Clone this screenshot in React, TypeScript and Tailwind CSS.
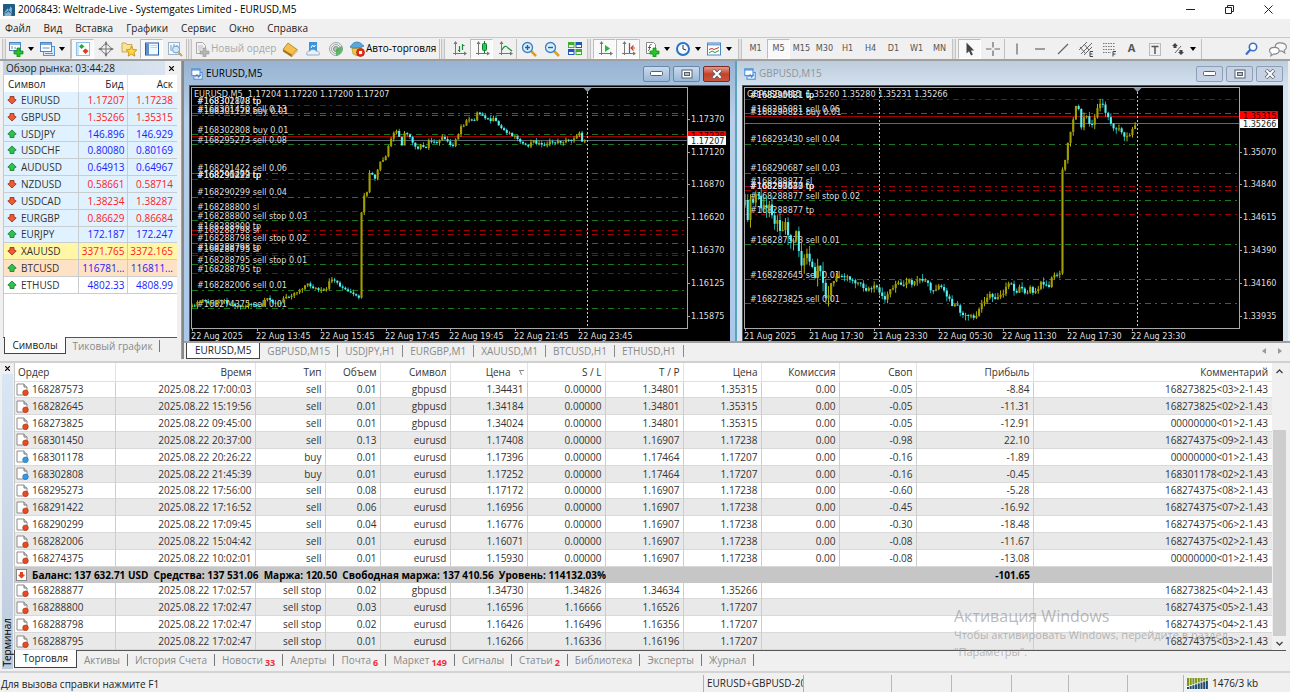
import type { ReactNode } from 'react';
import clsx from 'clsx';

/* ---------- data ---------- */

const MENU = ['Файл', 'Вид', 'Вставка', 'Графики', 'Сервис', 'Окно', 'Справка'];

type Quote = { symbol: string; bid: string; ask: string; up: boolean; bg: string };

const QUOTES: Quote[] = [
    { symbol: 'EURUSD', bid: '1.17207', ask: '1.17238', up: false, bg: 'bg-[#e0f2ff]' },
    { symbol: 'GBPUSD', bid: '1.35266', ask: '1.35315', up: false, bg: 'bg-[#e0f2ff]' },
    { symbol: 'USDJPY', bid: '146.896', ask: '146.929', up: true, bg: 'bg-[#e0f2ff]' },
    { symbol: 'USDCHF', bid: '0.80080', ask: '0.80169', up: true, bg: 'bg-[#e0f2ff]' },
    { symbol: 'AUDUSD', bid: '0.64913', ask: '0.64967', up: true, bg: 'bg-[#e0f2ff]' },
    { symbol: 'NZDUSD', bid: '0.58661', ask: '0.58714', up: false, bg: 'bg-[#e0f2ff]' },
    { symbol: 'USDCAD', bid: '1.38234', ask: '1.38287', up: false, bg: 'bg-[#e0f2ff]' },
    { symbol: 'EURGBP', bid: '0.86629', ask: '0.86684', up: false, bg: 'bg-[#e0f2ff]' },
    { symbol: 'EURJPY', bid: '172.187', ask: '172.247', up: true, bg: 'bg-[#e0f2ff]' },
    { symbol: 'XAUUSD', bid: '3371.765', ask: '3372.165', up: false, bg: 'bg-[#fff6a6]' },
    { symbol: 'BTCUSD', bid: '116781...', ask: '116811...', up: true, bg: 'bg-[#ffe2c4]' },
    { symbol: 'ETHUSD', bid: '4802.33', ask: '4808.99', up: true, bg: 'bg-white' },
];

// order, time, type, volume, symbol, price, s/l, t/p, price, commission, swap, profit, comment
const POSITIONS: string[][] = [
    ['168287573', '2025.08.22 17:00:03', 'sell', '0.01', 'gbpusd', '1.34431', '0.00000', '1.34801', '1.35315', '0.00', '-0.05', '-8.84', '168273825<03>2-1.43'],
    ['168282645', '2025.08.22 15:19:56', 'sell', '0.01', 'gbpusd', '1.34184', '0.00000', '1.34801', '1.35315', '0.00', '-0.05', '-11.31', '168273825<02>2-1.43'],
    ['168273825', '2025.08.22 09:45:00', 'sell', '0.01', 'gbpusd', '1.34024', '0.00000', '1.34801', '1.35315', '0.00', '-0.05', '-12.91', '00000000<01>2-1.43'],
    ['168301450', '2025.08.22 20:37:00', 'sell', '0.13', 'eurusd', '1.17408', '0.00000', '1.16907', '1.17238', '0.00', '-0.98', '22.10', '168274375<09>2-1.43'],
    ['168301178', '2025.08.22 20:26:22', 'buy', '0.01', 'eurusd', '1.17396', '0.00000', '1.17464', '1.17207', '0.00', '-0.16', '-1.89', '00000000<01>2-1.43'],
    ['168302808', '2025.08.22 21:45:39', 'buy', '0.01', 'eurusd', '1.17252', '0.00000', '1.17464', '1.17207', '0.00', '-0.16', '-0.45', '168301178<02>2-1.43'],
    ['168295273', '2025.08.22 17:56:00', 'sell', '0.08', 'eurusd', '1.17172', '0.00000', '1.16907', '1.17238', '0.00', '-0.60', '-5.28', '168274375<08>2-1.43'],
    ['168291422', '2025.08.22 17:16:52', 'sell', '0.06', 'eurusd', '1.16956', '0.00000', '1.16907', '1.17238', '0.00', '-0.45', '-16.92', '168274375<07>2-1.43'],
    ['168290299', '2025.08.22 17:09:45', 'sell', '0.04', 'eurusd', '1.16776', '0.00000', '1.16907', '1.17238', '0.00', '-0.30', '-18.48', '168274375<06>2-1.43'],
    ['168282006', '2025.08.22 15:04:42', 'sell', '0.01', 'eurusd', '1.16071', '0.00000', '1.16907', '1.17238', '0.00', '-0.08', '-11.67', '168274375<02>2-1.43'],
    ['168274375', '2025.08.22 10:02:01', 'sell', '0.01', 'eurusd', '1.15930', '0.00000', '1.16907', '1.17238', '0.00', '-0.08', '-13.08', '00000000<01>2-1.43'],
];

const PENDING: string[][] = [
    ['168288877', '2025.08.22 17:02:57', 'sell stop', '0.02', 'gbpusd', '1.34730', '1.34826', '1.34634', '1.35266', '168273825<04>2-1.43'],
    ['168288800', '2025.08.22 17:02:47', 'sell stop', '0.03', 'eurusd', '1.16596', '1.16666', '1.16526', '1.17207', '168274375<05>2-1.43'],
    ['168288798', '2025.08.22 17:02:47', 'sell stop', '0.02', 'eurusd', '1.16426', '1.16496', '1.16356', '1.17207', '168274375<04>2-1.43'],
    ['168288795', '2025.08.22 17:02:47', 'sell stop', '0.01', 'eurusd', '1.16266', '1.16336', '1.16196', '1.17207', '168274375<03>2-1.43'],
];

const COLUMNS = [
    { title: 'Ордер', width: 'w-[100px]' },
    { title: 'Время', width: 'w-[140px]' },
    { title: 'Тип', width: 'w-[70px]' },
    { title: 'Объем', width: 'w-[55px]' },
    { title: 'Символ', width: 'w-[70px]' },
    { title: 'Цена', width: 'w-[77px]', sorted: true },
    { title: 'S / L', width: 'w-[78px]' },
    { title: 'T / P', width: 'w-[78px]' },
    { title: 'Цена', width: 'w-[78px]' },
    { title: 'Комиссия', width: 'w-[78px]' },
    { title: 'Своп', width: 'w-[77px]' },
    { title: 'Прибыль', width: 'w-[117px]' },
    { title: 'Комментарий', width: '' },
];

const TERMINAL_TABS: { title: string; count?: number }[] = [
    { title: 'Торговля' },
    { title: 'Активы' },
    { title: 'История Счета' },
    { title: 'Новости', count: 33 },
    { title: 'Алерты' },
    { title: 'Почта', count: 6 },
    { title: 'Маркет', count: 149 },
    { title: 'Сигналы' },
    { title: 'Статьи', count: 2 },
    { title: 'Библиотека' },
    { title: 'Эксперты' },
    { title: 'Журнал' },
];

const CHART_TABS = ['EURUSD,M5', 'GBPUSD,M15', 'USDJPY,H1', 'EURGBP,M1', 'XAUUSD,M1', 'BTCUSD,H1', 'ETHUSD,H1'];
const TIMEFRAMES = ['M1', 'M5', 'M15', 'M30', 'H1', 'H4', 'D1', 'W1', 'MN'];

/* ---------- charts ---------- */

type Point = [number, number];

type ChartData = {
    header: string;
    path: Point[];
    jitter: number;
    // candles left of this x swing twice as much
    wildUntil: number;
    green: number[];
    red: number[];
    askY: number;
    bidY: number;
    labels: [number, string][];
    prices: [number, string][];
    ask: string;
    bid: string;
    times: string[];
    separators: number[];
    plotRight: number;
};

// All chart coordinates are measured from the top left corner of the black area.
const EURUSD_CHART: ChartData = {
    header: 'EURUSD,M5  1.17204 1.17220 1.17200 1.17207',
    path: [
        [3, 222], [13, 215], [23, 219], [31, 215], [53, 222], [61, 218], [69, 223], [78, 214], [91, 219], [96, 212],
        [106, 208], [118, 199], [131, 206], [139, 204], [141, 193], [144, 194], [156, 205], [169, 213], [171, 210],
        [172, 132], [175, 112], [179, 107], [181, 82], [185, 97], [189, 84], [192, 75], [196, 75], [200, 60], [205, 47],
        [209, 47], [213, 62], [216, 47], [220, 50], [224, 60], [229, 65], [233, 58], [236, 67], [239, 56], [244, 55],
        [248, 59], [253, 51], [258, 55], [264, 62], [269, 50], [272, 42], [278, 36], [286, 34], [288, 28], [294, 30],
        [301, 36], [304, 34], [313, 44], [324, 50], [331, 55], [334, 60], [338, 62], [344, 56], [353, 60], [364, 57],
        [371, 57], [384, 54], [388, 49], [391, 49], [393, 56], [396, 54],
    ],
    jitter: 3,
    wildUntil: 0,
    green: [28, 30, 49, 59, 88, 112, 135, 158, 179, 205, 223],
    red: [20, 94, 126, 145, 149, 168, 170, 188],
    askY: 51,
    bidY: 55,
    labels: [
        [16, '#168302808 tp'], [16, '#168301178 tp'], [24, '#168301450 sell 0.13'], [26, '#168301178 buy 0.01'],
        [45, '#168302808 buy 0.01'], [55, '#168295273 sell 0.08'], [83, '#168291422 sell 0.06'],
        [90, '#168295273 tp'], [90, '#168291422 tp'], [90, '#168290299 tp'], [107, '#168290299 sell 0.04'],
        [122, '#168288800 sl'], [131, '#168288800 sell stop 0.03'], [141, '#168288800 tp'], [145, '#168288798 sl'],
        [153, '#168288798 sell stop 0.02'], [162, '#168288798 tp'], [164, '#168288795 sl'],
        [175, '#168288795 sell stop 0.01'], [184, '#168288795 tp'], [200, '#168282006 sell 0.01'],
        [219, '#168274375 sell 0.01'],
    ],
    prices: [
        [34, '1.17370'], [67, '1.17120'], [99, '1.16870'], [132, '1.16620'], [165, '1.16370'], [198, '1.16125'], [231, '1.15875'],
    ],
    ask: '1.17238',
    bid: '1.17207',
    times: ['22 Aug 2025', '22 Aug 13:45', '22 Aug 15:45', '22 Aug 17:45', '22 Aug 19:45', '22 Aug 21:45', '22 Aug 23:45'],
    separators: [398],
    plotRight: 498,
};

const GBPUSD_CHART: ChartData = {
    header: 'GBPUSD,M15  1.35260 1.35280 1.35231 1.35266',
    path: [
        [3, 120], [6, 132], [9, 115], [12, 118], [15, 105], [19, 122], [25, 125], [28, 117], [32, 135], [40, 143],
        [45, 135], [47, 156], [50, 157], [55, 146], [58, 175], [61, 185], [63, 162], [68, 182], [72, 185], [74, 202],
        [76, 182], [80, 195], [85, 213], [88, 202], [95, 192], [101, 188], [107, 193], [115, 197], [125, 205],
        [133, 202], [137, 207], [139, 213], [143, 213], [150, 202], [155, 198], [161, 202], [167, 197], [172, 199],
        [180, 195], [187, 199], [189, 208], [197, 202], [203, 208], [210, 220], [215, 222], [222, 232], [228, 232],
        [233, 234], [240, 218], [246, 210], [253, 213], [262, 206], [269, 198], [272, 207], [279, 203], [282, 209],
        [289, 202], [291, 208], [300, 197], [305, 203], [308, 205], [310, 190], [315, 190], [318, 186], [320, 87],
        [323, 73], [326, 58], [329, 43], [333, 23], [336, 23], [339, 42], [343, 30], [350, 41], [353, 32], [355, 22],
        [359, 16], [362, 26], [366, 30], [369, 41], [375, 43], [383, 51], [390, 47], [394, 37],
    ],
    jitter: 5,
    wildUntil: 90,
    green: [28, 31, 59, 88, 115, 159, 194, 218],
    red: [14, 101, 105, 129],
    askY: 31,
    bidY: 38,
    labels: [
        [10, '#168290821 tp'], [10, '#168295081 tp'], [24, '#168295081 sell 0.06'], [27, '#168290821 buy 0.01'],
        [54, '#168293430 sell 0.04'], [83, '#168290687 sell 0.03'], [96, '#168288877 sl'], [101, '#168293430 tp'],
        [101, '#168290687 tp'], [101, '#168287573 tp'], [111, '#168288877 sell stop 0.02'], [125, '#168288877 tp'],
        [155, '#168287573 sell 0.01'], [190, '#168282645 sell 0.01'], [214, '#168273825 sell 0.01'],
    ],
    prices: [
        [67, '1.35070'], [99, '1.34840'], [132, '1.34615'], [165, '1.34390'], [198, '1.34160'], [231, '1.33935'],
    ],
    ask: '1.35315',
    bid: '1.35266',
    times: ['21 Aug 2025', '21 Aug 17:30', '21 Aug 23:30', '22 Aug 05:30', '22 Aug 11:30', '22 Aug 17:30', '22 Aug 23:30'],
    separators: [137, 395],
    plotRight: 497,
};

const CANDLE_STEP = 2.69;

function noise(i: number) {
    const v = Math.sin(i * 12.9898) * 43758.5453;
    return v - Math.floor(v);
}

function priceAt(path: Point[], x: number) {
    for (let i = 1; i < path.length; i++) {
        const [x0, y0] = path[i - 1];
        const [x1, y1] = path[i];
        if (x <= x1) return y0 + ((y1 - y0) * (x - x0)) / (x1 - x0);
    }
    return path[path.length - 1][1];
}

function Candles({ path, jitter, wildUntil }: { path: Point[]; jitter: number; wildUntil: number }) {
    const start = path[0][0];
    const end = path[path.length - 1][0];
    const count = Math.floor((end - start) / CANDLE_STEP) + 1;
    let open = path[0][1];

    return (
        <g>
            {Array.from({ length: count }, (_, i) => {
                const x = start + i * CANDLE_STEP;
                const swing = x < wildUntil ? jitter * 2 : jitter;
                const close = priceAt(path, x) + (noise(i) - 0.5) * swing;
                const top = Math.min(open, close);
                const height = Math.max(Math.abs(close - open), 1);
                const up = close < open;
                const high = top - noise(i + 500) * swing;
                const low = top + height + noise(i + 900) * swing;
                open = close;
                return (
                    <g key={i}>
                        <rect x={x - 0.4} y={high} width={0.9} height={low - high} fill={up ? '#c8c400' : '#1fc4c4'} />
                        <rect x={x - 1} y={top} width={2.1} height={height} fill={up ? '#a39e00' : '#5af0f0'} />
                    </g>
                );
            })}
        </g>
    );
}

function Chart({ data }: { data: ChartData }) {
    const { plotRight } = data;
    const last = data.separators[data.separators.length - 1];

    return (
        <svg
            role="img"
            aria-label={data.header}
            className="block w-full h-64 bg-black font-['DejaVu_Sans_Condensed','Open_Sans',sans-serif] text-[9px]"
        >
            <g shapeRendering="crispEdges">
                <path d="M0.5 256V0.5H2000" stroke="#555" fill="none" />
                {data.green.map((y) => (
                    <path key={y} d={`M3 ${y + 0.5}H${plotRight}`} stroke="#1a7a1a" strokeDasharray="6 4 2 4" />
                ))}
                {data.red.map((y) => (
                    <path key={y} d={`M3 ${y + 0.5}H${plotRight}`} stroke="#a00000" strokeDasharray="6 4 2 4" />
                ))}
                <path d={`M3 ${data.askY + 0.5}H${plotRight}`} stroke="#a00000" />
                <path d={`M3 ${data.bidY + 0.5}H${plotRight}`} stroke="#5d6a76" />
                {data.separators.map((x) => (
                    <path key={x} d={`M${x + 0.5} 3V243`} stroke="#c8c8c8" strokeDasharray="2 2" />
                ))}
            </g>

            <g fill="#dedede">
                <text x="5" y="12" xmlSpace="preserve">{data.header}</text>
                {data.labels.map(([y, text], i) => (
                    <text key={i} x="8" y={y + 3}>{text}</text>
                ))}
            </g>

            <Candles path={data.path} jitter={data.jitter} wildUntil={data.wildUntil} />

            <g shapeRendering="crispEdges">
                <path d={`M2.5 2.5H${plotRight + 0.5}V243.5H2.5Z`} stroke="#a8a8a8" fill="none" />
                {data.prices.map(([y]) => (
                    <path key={y} d={`M${plotRight} ${y + 0.5}h3`} stroke="#a8a8a8" />
                ))}
                {data.times.map((time, i) => (
                    <path key={time} d={`M${3.5 + Math.round(i * 64.5)} 243v3`} stroke="#a8a8a8" />
                ))}
            </g>
            <path d={`M${last - 3.5} 3h8l-4 4z`} fill="#8597a8" />

            <g fill="#dedede">
                {data.prices.map(([y, text]) => (
                    <text key={y} x={plotRight + 4} y={y + 3}>{text}</text>
                ))}
                {data.times.map((time, i) => (
                    <text key={time} x={2 + Math.round(i * 64.5)} y="254">{time}</text>
                ))}
            </g>

            <rect x={plotRight + 1} y={data.askY - 5} width="38" height="10" fill="#f00" />
            <text x={plotRight + 4} y={data.askY + 3} fill="#300">{data.ask}</text>
            <rect x={plotRight + 1} y={data.bidY - 4} width="38" height="9" fill="#fff" />
            <text x={plotRight + 4} y={data.bidY + 4} fill="#222">{data.bid}</text>
        </svg>
    );
}

/* ---------- icons ---------- */

function Icon({ children, size = 16 }: { children: ReactNode; size?: number }) {
    return (
        <svg width={size} height={size} viewBox="0 0 16 16" fill="none" className="shrink-0" aria-hidden="true">
            {children}
        </svg>
    );
}

const PLUS = 'M9 7h3v3h3v3h-3v3H9v-3H6v-3h3z';

function NewChartIcon() {
    return (
        <Icon>
            <rect x="1.5" y="1.5" width="11" height="8" fill="#fff" stroke="#4a86c5" />
            <path d="M2 2h10v2H2z" fill="#8db8e6" />
            <path d="M4 8V5m3 3V6" stroke="#68a" />
            <path d={PLUS} fill="#27c627" stroke="#0a800a" strokeWidth=".7" />
        </Icon>
    );
}

function WindowsIcon() {
    return (
        <Icon>
            <rect x="4.5" y="5.5" width="11" height="9" fill="#dbeafa" stroke="#5b93d3" />
            <rect x="1.5" y="1.5" width="11" height="9" fill="#fff" stroke="#4a86c5" />
            <path d="M2 2h10v2H2z" fill="#79a9de" />
            <path d="M3.500 7h7M6 12.500h8" stroke="#5b93d3" />
        </Icon>
    );
}

function MarketWatchIcon() {
    return (
        <Icon>
            <rect x="1.5" y="1.5" width="13" height="13" fill="#fff" stroke="#8fc1e8" />
            <path d="M2 2h2v12H2z" fill="#cde4f7" />
            <path d="M6.500 3l3 2.500-3 2.500L4 5.500z" fill="#1fae3d" />
            <path d="M10.500 7.500l3 2.500-3 3-3-3z" fill="#e03c20" />
        </Icon>
    );
}

function DataIcon() {
    return (
        <Icon>
            <circle cx="8" cy="8" r="4.500" stroke="#777" />
            <path d="M8 1v14M1 8h14" stroke="#777" />
            <path d="M8 0l1.500 3h-3zM8 16l1.500-3h-3zM0 8l3-1.500v3zM16 8l-3-1.500v3z" fill="#777" />
        </Icon>
    );
}

function NavigatorIcon() {
    return (
        <Icon>
            <path d="M1 2h4l1 1.500h5V11H1z" fill="#fbe29a" stroke="#c79a35" strokeWidth=".8" />
            <path d="M10.500 5l1.600 3.500 3.700.4-2.700 2.500.7 3.700-3.300-1.900-3.300 1.900.7-3.700L5.200 8.900l3.700-.4z" fill="#ffd83a" stroke="#b98410" strokeWidth=".8" />
        </Icon>
    );
}

function TerminalIcon() {
    return (
        <Icon>
            <rect x="1.500" y="2" width="13" height="12" fill="#f2f8ff" stroke="#2a5fa8" />
            <path d="M2 2.500h3V14H2z" fill="#5c91d2" />
            <path d="M6.500 4.500h7M6.500 6.500h7" stroke="#bcd4ef" />
        </Icon>
    );
}

function TesterIcon() {
    return (
        <Icon>
            <rect x="1.500" y="1.500" width="11" height="12" fill="#f4f8fc" stroke="#9db4c9" />
            <path d="M4 4v6M7 3v5M10 4v4" stroke="#7c97b0" />
            <circle cx="9" cy="8.500" r="3.500" fill="#cfe8fb" stroke="#6b9fcb" />
            <path d="M11.500 11.500L15 15" stroke="#d9a12b" strokeWidth="2" />
        </Icon>
    );
}

function OrderIcon() {
    return (
        <Icon>
            <path d="M2.500 1.500h6l3 3v8h-9z" fill="#f4f4f4" stroke="#a9a9a9" />
            <path d="M4 5h5M4 7h5M4 9h3" stroke="#bbb" />
            <path d={PLUS} fill="#b4b4b4" stroke="#999" strokeWidth=".6" />
        </Icon>
    );
}

function BookIcon() {
    return (
        <Icon>
            <path d="M1 8.500L6 2l9 6.500L10 14z" fill="#f3c14b" stroke="#b07a14" strokeWidth=".8" />
            <path d="M1 8.500v2l8.500 5.500.5-2z" fill="#a86f12" />
            <path d="M10 14l5-5.500v2L9.500 16z" fill="#fff3cf" stroke="#b07a14" strokeWidth=".6" />
        </Icon>
    );
}

function SignalsIcon() {
    return (
        <Icon>
            <path d="M4 1h8v9H4z" fill="#3b94dc" />
            <path d="M6 7l1.500-3L9 6l1.500-2" stroke="#fff" />
            <path d="M2 14c-1-3 1-4 3-4 1-2 5-2 6 0 3 0 4 2 3 4z" fill="#e9f1f8" stroke="#7d9cbb" strokeWidth=".8" />
        </Icon>
    );
}

function RadarIcon() {
    return (
        <Icon>
            <circle cx="8" cy="8" r="6.500" stroke="#9aa5a7" />
            <circle cx="8" cy="8" r="4.500" stroke="#9aa5a7" />
            <circle cx="8" cy="8" r="2.500" fill="#b8c4b8" stroke="#7c8c80" />
            <path d="M8 8l6-3c1.500 4-.5 8-6 10z" fill="#3cab45" fillOpacity=".75" />
        </Icon>
    );
}

function AutoTradeIcon() {
    return (
        <Icon>
            <path d="M3 7h10l-1 5-4 3-4-2z" fill="#f2c744" stroke="#b98410" strokeWidth=".6" />
            <path d="M1 6c2-2 3-5 7-5s5 3 7 4c-3 2-11 3-14 1z" fill="#58a8dc" stroke="#2a6ea3" strokeWidth=".7" />
            <circle cx="11.500" cy="11.500" r="4" fill="#e0301e" stroke="#a31208" strokeWidth=".6" />
            <path d="M10 10h3v3h-3z" fill="#fff" />
        </Icon>
    );
}

function AxisIcon({ children }: { children: ReactNode }) {
    return (
        <Icon>
            <path d="M4.500 2v12M2 12.500h13" stroke="#777" />
            <path d="M4.500 0L6.500 3h-4zM16 12.500l-3 2v-4z" fill="#777" />
            {children}
        </Icon>
    );
}

function ZoomIcon({ plus }: { plus?: boolean }) {
    return (
        <Icon>
            <path d="M10 10l5 5" stroke="#d9a12b" strokeWidth="2.500" />
            <circle cx="6.500" cy="6.500" r="5" fill="#d9eefc" stroke="#3a7fc4" strokeWidth="1.300" />
            <path d={plus ? 'M6.500 4v5M4 6.500h5' : 'M4 6.500h5'} stroke="#1f5fae" strokeWidth="1.400" />
        </Icon>
    );
}

function TileIcon() {
    return (
        <Icon>
            <path d="M1 1h6.500v6H1zM8.500 8H15v6H8.500z" fill="#3fae2a" />
            <path d="M8.500 1H15v6H8.500zM1 8h6.500v6H1z" fill="#2456b8" />
            <path d="M2 4h4.500v2H2zM9.500 4H14v2H9.500zM2 11h4.500v2H2zM9.500 11H14v2H9.500z" fill="#f4f8ff" />
        </Icon>
    );
}

function IndicatorIcon() {
    return (
        <Icon>
            <path d="M2.500 1.500h7l2 2v9h-9z" fill="#fff" stroke="#888" />
            <path d="M7.500 3.500c-2 0-2 1-2 3s0 3-1.500 3M4 6.500h3" stroke="#555" />
            <path d={PLUS} fill="#27c627" stroke="#0a800a" strokeWidth=".7" />
        </Icon>
    );
}

function ClockIcon() {
    return (
        <Icon>
            <circle cx="8" cy="8" r="6" fill="#f4faff" stroke="#2873c4" strokeWidth="2" />
            <path d="M8 4v4l3 1" stroke="#333" />
        </Icon>
    );
}

function TemplateIcon() {
    return (
        <Icon>
            <rect x="1.500" y="2" width="13" height="12" fill="#fff" stroke="#4a86c5" />
            <path d="M2 2.500h12v2H2z" fill="#79a9de" />
            <path d="M3 8.500l3-1 2 1 5-2" stroke="#c0392b" />
            <path d="M3 12l3-2 3 1.500 4-2" stroke="#2a9a3a" />
        </Icon>
    );
}

function CursorIcon() {
    return (
        <Icon>
            <path d="M4.500 1.500v11l2.500-2.300 2 4.300 1.900-.9-2-4.200h3.300z" fill="#444" />
        </Icon>
    );
}

function Line({ d }: { d: string }) {
    return (
        <Icon>
            <path d={d} stroke="#666" strokeWidth="1.200" />
        </Icon>
    );
}

function ChannelIcon() {
    return (
        <Icon>
            <path d="M1 9l8-8M3 13L14 2M6 14l8-8M2 6l5 6M6 3l5 6" stroke="#666" />
            <path d="M15 10.500h-3v5h3M12 13h2.500" stroke="#444" />
        </Icon>
    );
}

function FiboIcon() {
    return (
        <Icon>
            <path d="M2 2.500h12M2 5.500h12M2 8.500h12M2 11.500h8" stroke="#777" strokeDasharray="1.500 1" />
            <path d="M15 10.500h-3v5M12 13h2.500" stroke="#444" />
        </Icon>
    );
}

function LabelIcon() {
    return (
        <Icon>
            <rect x="2.500" y="2.500" width="11" height="12" stroke="#888" strokeDasharray="1 1" />
            <path d="M4.500 5.500h7M8 5.500V13" stroke="#555" strokeWidth="1.500" />
        </Icon>
    );
}

function ArrowsIcon() {
    return (
        <Icon>
            <path d="M5 2l3 3H6.500v2h-3V5H2zM11 14l3-3h-1.500V9h-3v2H8z" fill="#444" />
            <path d="M5 12l6-7" stroke="#666" />
        </Icon>
    );
}

function SearchIcon() {
    return (
        <Icon>
            <circle cx="10" cy="6" r="3.700" fill="#fff" stroke="#3d6fc8" strokeWidth="1.600" />
            <path d="M7.500 8.500L3 13.500" stroke="#3d6fc8" strokeWidth="2.200" />
        </Icon>
    );
}

function ChatIcon() {
    return (
        <Icon size={18}>
            <path d="M9.500 2.500c3.500 0 6 1.500 6 3.700 0 1.300-.8 2.400-2 3l.5 2.300-2.500-1.700c-3.500.3-6-1.200-6-3.500s1.500-3.800 4-3.800z" fill="#f6f6f6" stroke="#888" />
            <path d="M5 6.500c-2.500 0-4.500 1.200-4.500 3 0 1 .6 1.800 1.500 2.400L1.700 14l2.300-1.500c3 .2 5-1 5-3s-1.500-3-4-3z" fill="#fff" stroke="#888" />
        </Icon>
    );
}

function AppIcon() {
    return (
        <Icon size={12}>
            <rect width="16" height="16" rx="1" fill="#1f5c85" />
            <path d="M2 16v-5l4-5 2 2 2-5 2 3-1 10z" fill="#7fb6d6" />
            <path d="M3 12l5-3 2 3" stroke="#0d344f" />
        </Icon>
    );
}

function MdiIcon({ faded }: { faded?: boolean }) {
    return (
        <Icon size={12}>
            <rect x="4" y="6" width="11" height="9" fill="#eaf3fd" stroke={faded ? '#4f93e0' : '#5b93d3'} strokeWidth="1.500" />
            <rect x="1" y="1" width="11" height="9" fill="#fff" stroke={faded ? '#4f93e0' : '#5b93d3'} strokeWidth="1.500" />
            <path d="M1 2.500h11M6 12l2-3 2 3 3-3" stroke="#4a86c5" strokeWidth="1.500" />
        </Icon>
    );
}

function QuoteArrow({ up }: { up: boolean }) {
    return (
        <svg width="10" height="10" viewBox="0 0 10 10" className="shrink-0" aria-hidden="true">
            <path
                d={up ? 'M5 1L9.200 5 7 6.200V8.500H3V6.200L.8 5z' : 'M5 9L.8 5 3 3.800V1.500h4v2.300L9.200 5z'}
                fill={up ? '#2fc24c' : '#ee5a34'}
                stroke={up ? '#15752a' : '#96290f'}
                strokeWidth=".8"
            />
        </svg>
    );
}

function OrderRowIcon({ type }: { type: string }) {
    return (
        <svg width="13" height="13" viewBox="0 0 13 13" className="shrink-0" aria-hidden="true">
            <path d="M1 1h7l3 3v8H1z" fill="#fff" stroke="#8b8b8b" />
            <path d="M8 1v3h3" fill="#ddd" stroke="#777" />
            <circle cx="9.500" cy="9.800" r="2.800" fill={type === 'buy' ? '#2f9be8' : '#ea4a22'} stroke={type === 'buy' ? '#176bb0' : '#a82c0e'} strokeWidth=".6" />
        </svg>
    );
}

/* ---------- toolbar ---------- */

function Tool({ label, active, children }: { label: string; active?: boolean; children: ReactNode }) {
    return (
        <button
            aria-label={label}
            className={clsx(
                'flex h-5 w-[23px] shrink-0 items-center justify-center border text-[9px] text-[#555]',
                active ? 'border-[#bdbdbd] border-b-white border-r-white bg-[#f9f9f9]' : 'border-transparent',
            )}
        >
            {children}
        </button>
    );
}

function DropTool({ label, children }: { label: string; children: ReactNode }) {
    return (
        <button aria-label={label} className="flex h-5 w-[31px] shrink-0 items-center gap-1">
            {children}
            <svg width="6" height="4" viewBox="0 0 6 4" aria-hidden="true">
                <path d="M0 0h6L3 4z" fill="#000" />
            </svg>
        </button>
    );
}

function Separator() {
    return <span className="h-5 w-px shrink-0 bg-[#c0c0c0]" />;
}

function Grip() {
    return <span className="ml-px mr-0.5 h-5 w-1 shrink-0 border-x border-[#c4c4c4] bg-[#e2e2e2]" />;
}

function Toolbar() {
    return (
        <div role="toolbar" className="flex h-6 items-center overflow-hidden border-b-2 border-t border-b-[#a0a0a0] border-t-[#c9c9c9] bg-[#f0f0f0] px-px">
            <Grip />
            <DropTool label="Новый график"><NewChartIcon /></DropTool>
            <DropTool label="Профили"><WindowsIcon /></DropTool>
            <Separator />
            <Tool label="Обзор рынка" active><MarketWatchIcon /></Tool>
            <Tool label="Окно данных"><DataIcon /></Tool>
            <Tool label="Навигатор"><NavigatorIcon /></Tool>
            <Tool label="Терминал" active><TerminalIcon /></Tool>
            <Tool label="Тестер стратегий"><TesterIcon /></Tool>
            <Separator />
            <Grip />
            <button disabled className="flex h-5 w-[84px] shrink-0 items-center gap-px whitespace-nowrap text-[10px] text-[#a8a8a8]">
                <OrderIcon />
                Новый ордер
            </button>
            <Tool label="MetaEditor"><BookIcon /></Tool>
            <Tool label="Сигналы"><SignalsIcon /></Tool>
            <Tool label="Хостинг"><RadarIcon /></Tool>
            <button className="flex h-5 w-[92px] shrink-0 items-center gap-px whitespace-nowrap pl-0.5 text-[10px] text-black">
                <AutoTradeIcon />
                Авто-торговля
            </button>
            <Separator />
            <Grip />
            <Tool label="Бары">
                <AxisIcon><path d="M8.500 5v6M8.500 9.500H7M11.500 3v6M11.500 4.500h2" stroke="#16913a" strokeWidth="1.200" /></AxisIcon>
            </Tool>
            <Tool label="Свечи" active>
                <AxisIcon>
                    <path d="M10.500 0v12" stroke="#0d7a2c" />
                    <rect x="8.500" y="2.500" width="4" height="7" rx="1" fill="#2fc850" stroke="#0d7a2c" />
                </AxisIcon>
            </Tool>
            <Tool label="Линия">
                <AxisIcon><path d="M5 9c2-4 4-5 6-2l4 3" stroke="#16913a" strokeWidth="1.200" /></AxisIcon>
            </Tool>
            <Separator />
            <Tool label="Увеличить"><ZoomIcon plus /></Tool>
            <Tool label="Уменьшить"><ZoomIcon /></Tool>
            <Tool label="Расположить окна"><TileIcon /></Tool>
            <Grip />
            <Tool label="Автопрокрутка" active>
                <AxisIcon><path d="M8 4l5 3.500L8 11z" fill="#26b443" /></AxisIcon>
            </Tool>
            <Tool label="Сдвиг графика" active>
                <AxisIcon>
                    <path d="M9.500 2v10" stroke="#3567b5" strokeWidth="1.200" />
                    <path d="M15 7h-4m2.500-2.500L11 7l2.500 2.500" stroke="#d2431f" strokeWidth="1.200" />
                </AxisIcon>
            </Tool>
            <Separator />
            <div className="flex pl-1">
                <DropTool label="Индикаторы"><IndicatorIcon /></DropTool>
                <DropTool label="Периоды"><ClockIcon /></DropTool>
                <DropTool label="Шаблоны"><TemplateIcon /></DropTool>
            </div>
            <Grip />
            <div className="flex font-['DejaVu_Sans_Condensed','Open_Sans',sans-serif]">
                {TIMEFRAMES.map((tf) => (
                    <Tool key={tf} label={tf} active={tf === 'M5'}>{tf}</Tool>
                ))}
            </div>
            <Grip />
            <Tool label="Курсор" active><CursorIcon /></Tool>
            <Tool label="Перекрестие"><Line d="M8 1v5.500M8 9.500V15M1 8h5.500M9.500 8H15" /></Tool>
            <Separator />
            <Tool label="Вертикальная линия"><Line d="M8 2.500v11" /></Tool>
            <Tool label="Горизонтальная линия"><Line d="M3 8h10" /></Tool>
            <Tool label="Трендовая линия"><Line d="M3 13L13 3" /></Tool>
            <Tool label="Канал"><ChannelIcon /></Tool>
            <Tool label="Фибоначчи"><FiboIcon /></Tool>
            <Tool label="Текст"><span className="text-[11px] font-bold">A</span></Tool>
            <Tool label="Метка"><LabelIcon /></Tool>
            <div className="flex pl-1"><DropTool label="Стрелки"><ArrowsIcon /></DropTool></div>
            <Separator />
            <div className="ml-auto flex gap-1">
                <Tool label="Поиск"><SearchIcon /></Tool>
                <Tool label="Чат"><ChatIcon /></Tool>
            </div>
        </div>
    );
}

/* ---------- panels ---------- */

function TitleBar() {
    return (
        <header className="flex h-[19px] items-center bg-white pl-[3px] pr-0.5">
            <AppIcon />
            <h1 className="ml-[3px] text-[10px] text-black">2006843: Weltrade-Live - Systemgates Limited - EURUSD,M5</h1>
            <div className="ml-auto flex">
                <button aria-label="Свернуть" className="flex w-[39px] justify-center">
                    <svg width="9" height="9" viewBox="0 0 9 9"><path d="M0 4.500h9" stroke="#222" /></svg>
                </button>
                <button aria-label="Развернуть" className="flex w-[39px] justify-center">
                    <svg width="9" height="9" viewBox="0 0 9 9" fill="none"><path d="M.5 2.500h6v6h-6zM2.500 2.500v-2h6v6h-2" stroke="#222" /></svg>
                </button>
                <button aria-label="Закрыть" className="flex w-[39px] justify-center">
                    <svg width="9" height="9" viewBox="0 0 9 9"><path d="M.5.5l8 8M8.500.5l-8 8" stroke="#222" /></svg>
                </button>
            </div>
        </header>
    );
}

function CloseMark() {
    return (
        <svg width="5" height="5" viewBox="0 0 5 5" aria-hidden="true">
            <path d="M0 0l5 5M5 0L0 5" stroke="#000" strokeWidth="1.200" />
        </svg>
    );
}

function MarketWatch() {
    return (
        <aside className="flex w-[182px] shrink-0 flex-col border-r border-[#a0a0a0] pl-[3px] pr-1">
            <div className="flex h-3.5 items-center justify-between bg-linear-to-r from-[#c3d2e2] to-[#dbe5f0] pl-[3px]">
                <h2 className="text-[10px] leading-3 text-[#222]">Обзор рынка: 03:44:28</h2>
                <button aria-label="Закрыть обзор рынка" className="flex h-full w-3 items-center justify-center bg-[#f0f0f0]"><CloseMark /></button>
            </div>
            <div className="h-[262px] border-l border-[#c8c8c8] bg-white">
                <table className="h-[219px] w-full table-fixed border-collapse text-[10px] leading-[14px]">
                    <thead>
                        <tr className="h-[17px] text-[#222]">
                            <th className="w-[74px] border-r border-[#e4e4e4] pl-1 text-left font-normal">Символ</th>
                            <th className="w-[49px] border-r border-[#e4e4e4] pr-[3px] text-right font-normal">Бид</th>
                            <th className="pr-1 text-right font-normal">Аск</th>
                        </tr>
                    </thead>
                    <tbody>
                        {QUOTES.map((q) => (
                            <tr key={q.symbol} className={clsx('border-b border-[#c9cdd0]', q.bg)}>
                                <td className="border-r border-[#c9cdd0] pl-[3px] text-[#333]">
                                    <div className="flex items-center gap-1">
                                        <QuoteArrow up={q.up} />
                                        {q.symbol}
                                    </div>
                                </td>
                                <td className={clsx('border-r border-[#c9cdd0] pr-0.5 text-right', q.up ? 'text-[#2020ff]' : 'text-[#ff2020]')}>{q.bid}</td>
                                <td className={clsx('pr-1 text-right', q.up ? 'text-[#2020ff]' : 'text-[#ff2020]')}>{q.ask}</td>
                            </tr>
                        ))}
                    </tbody>
                </table>
            </div>
            <div className="flex h-[17px] border-t border-[#555] pl-px text-[10px]">
                <button className="-mt-px w-[62px] border border-t-0 border-[#444] bg-white text-[#222]">Символы</button>
                <button className="my-0.5 flex w-[94px] items-center justify-center border-r border-[#777] text-[#8a8a8a]">Тиковый график</button>
            </div>
        </aside>
    );
}

function ChartWindow({ title, data, active }: { title: string; data: ChartData; active?: boolean }) {
    const control = clsx(
        'flex h-4 w-[27px] items-center justify-center rounded-[2px] border',
        active ? 'border-[#6b86a6] bg-linear-to-b from-[#c9dbee] to-[#9ab7d7]' : 'border-[#8d9fb8] bg-[#c7d3e4]',
    );

    return (
        <section
            className={clsx(
                'flex min-w-0 flex-1 flex-col border-r-2 px-[5px]',
                active
                    ? 'border-[#5ba3b8] bg-linear-to-b from-[#98b4d2] via-[#b7cfe9] via-20% to-[#a9c8e8]'
                    : 'border-[#f0f0f0] bg-linear-to-b from-[#becddb] to-[#d6e4f2] to-10%',
            )}
        >
            <div className="flex h-6 shrink-0 items-center pl-0.5 pt-px">
                <MdiIcon faded={!active} />
                <h2 className={clsx('ml-[3px] text-[10px]', active ? 'text-black' : 'text-[#8d9499]')}>{title}</h2>
                <div className="ml-auto flex gap-[3px]">
                    <button aria-label="Свернуть окно" className={control}>
                        <svg width="13" height="5" viewBox="0 0 13 5"><rect x=".5" y=".5" width="12" height="4" rx="1" fill="#fff" stroke="#56606c" /></svg>
                    </button>
                    <button aria-label="Развернуть окно" className={control}>
                        <svg width="12" height="10" viewBox="0 0 12 10" fill="none">
                            <rect x="1" y="1" width="10" height="8" fill="#fff" stroke="#56606c" />
                            <rect x="3.500" y="3.500" width="5" height="3" fill="#aebfd3" stroke="#56606c" />
                        </svg>
                    </button>
                    <button
                        aria-label="Закрыть окно"
                        className={clsx(
                            'flex h-4 w-[27px] items-center justify-center rounded-[2px] border',
                            active ? 'border-[#7b2a20] bg-linear-to-b from-[#e09a8c] via-[#c4412c] to-[#c9553c]' : 'border-[#8d9fb8] bg-[#c7d3e4]',
                        )}
                    >
                        <svg width="12" height="10" viewBox="0 0 12 10" fill="none">
                            <path d="M2 1l8 8M10 1L2 9" stroke="#56606c" strokeWidth="3.600" />
                            <path d="M2.300 1.300l7.400 7.400M9.700 1.300L2.300 8.700" stroke="#fff" strokeWidth="2" />
                        </svg>
                    </button>
                </div>
            </div>
            <Chart data={data} />
        </section>
    );
}

function ChartArea() {
    return (
        <div className="flex min-w-0 flex-1 flex-col border-l-2 border-[#888]">
            <div className="flex border-b-2 border-[#a0a0a0]">
                <ChartWindow title="EURUSD,M5" data={EURUSD_CHART} active />
                <ChartWindow title="GBPUSD,M15" data={GBPUSD_CHART} />
            </div>
            <div className="flex h-4 items-center pl-0.5 text-[10px]">
                {CHART_TABS.map((tab, i) => (
                    <button
                        key={tab}
                        className={clsx(
                            i === 0
                                ? 'h-4 border border-t-0 border-[#444] bg-white px-2 text-[#222]'
                                : 'h-3 border-r border-[#8a8a8a] px-[7px] leading-3 text-[#8a8a8a]',
                        )}
                    >
                        {tab}
                    </button>
                ))}
                <div className="ml-auto flex gap-3 pr-2">
                    <button aria-label="Назад"><svg width="4" height="6" viewBox="0 0 4 6"><path d="M4 0v6L0 3z" fill="#999" /></svg></button>
                    <button aria-label="Вперед"><svg width="4" height="6" viewBox="0 0 4 6"><path d="M0 0v6l4-3z" fill="#999" /></svg></button>
                </div>
            </div>
        </div>
    );
}

const CELL = 'overflow-hidden whitespace-nowrap border-r border-[#cdcdcd] pr-[3px] text-right';

function OrderCell({ order, type }: { order: string; type: string }) {
    return (
        <td className="border-r border-[#cdcdcd] pl-px">
            <div className="flex items-center gap-[3px]">
                <OrderRowIcon type={type} />
                {order}
            </div>
        </td>
    );
}

function TradeTable() {
    return (
        <table className="h-full w-full table-fixed border-collapse bg-white text-[10px] leading-[14px] text-[#333]">
            <thead>
                <tr className="h-[18px] border-b border-[#e0e0e0]">
                    {COLUMNS.map((col, i) => (
                        <th
                            key={i}
                            className={clsx(
                                'border-r border-[#e4e4e4] font-normal last:border-r-0 last:pr-1',
                                i === 0 ? 'pl-[3px] text-left' : 'pr-[3px] text-right',
                                col.width,
                            )}
                        >
                            {col.title}
                            {col.sorted && (
                                <svg width="5" height="6" viewBox="0 0 5 6" className="ml-2 inline" aria-hidden="true">
                                    <path d="M0 .5h5M1 1l1.500 4" stroke="#888" fill="none" />
                                </svg>
                            )}
                        </th>
                    ))}
                </tr>
            </thead>
            <tbody>
                {POSITIONS.map((row, i) => (
                    <tr key={row[0]} className={clsx('border-b border-[#d9d9d9]', i % 2 ? 'bg-[#e9e9e9]' : 'bg-white')}>
                        <OrderCell order={row[0]} type={row[2]} />
                        {row.slice(1, 12).map((value, c) => (
                            <td key={c} className={CELL}>{value}</td>
                        ))}
                        <td className="pr-1 text-right">{row[12]}</td>
                    </tr>
                ))}
                <tr className="bg-[#c6c6c6] font-bold text-black">
                    <td colSpan={11} className="pl-px">
                        <div className="flex items-center gap-[5px]">
                            <svg width="11" height="12" viewBox="0 0 11 12" aria-hidden="true">
                                <rect x=".5" y=".5" width="10" height="11" fill="#fff" stroke="#888" />
                                <path d="M5.500 9.500L2 6l2-.7V3h3v2.300L9 6z" fill="#e2401c" />
                            </svg>
                            <span className="whitespace-pre">
                                Баланс: 137 632.71 USD  Средства: 137 531.06  Маржа: 120.50  Свободная маржа: 137 410.56  Уровень: 114132.03%
                            </span>
                        </div>
                    </td>
                    <td className="pr-[3px] text-right">-101.65</td>
                    <td />
                </tr>
                {PENDING.map((row, i) => (
                    <tr key={row[0]} className={clsx('border-b border-[#d9d9d9]', i % 2 ? 'bg-[#e9e9e9]' : 'bg-white')}>
                        <OrderCell order={row[0]} type={row[2]} />
                        {row.slice(1, 9).map((value, c) => (
                            <td key={c} className={CELL}>{value}</td>
                        ))}
                        <td colSpan={3} className="border-r border-[#cdcdcd]" />
                        <td className="pr-1 text-right">{row[9]}</td>
                    </tr>
                ))}
            </tbody>
        </table>
    );
}

function Terminal() {
    return (
        <section className="mt-0.5 flex min-h-0 flex-1 border-t-2 border-[#d0d0d0] pr-1">
            <div className="flex w-3.5 shrink-0 flex-col items-center">
                <button aria-label="Закрыть терминал" className="flex h-2.5 items-center"><CloseMark /></button>
                <div className="mt-px flex min-h-0 w-[11px] flex-1 flex-col justify-end bg-linear-to-b from-[#d9e6f4] to-[#bccbdc] pb-0.5">
                    <h2 className="rotate-180 whitespace-nowrap text-[10px] leading-[11px] [writing-mode:vertical-rl]">Терминал</h2>
                </div>
            </div>
            <div className="flex min-w-0 flex-1 flex-col">
                <div className="flex min-h-0 flex-1 border-b border-l border-b-[#555] border-l-[#c8c8c8]">
                    <div className="min-w-0 flex-1">
                        <TradeTable />
                    </div>
                    <div className="flex w-3.5 shrink-0 flex-col items-center">
                        <button aria-label="Вверх" className="flex h-4 items-center">
                            <svg width="7" height="5" viewBox="0 0 7 5" fill="none"><path d="M.5 4l3-3 3 3" stroke="#444" strokeWidth="1.400" /></svg>
                        </button>
                        <div className="flex w-[13px] flex-1 flex-col justify-end">
                            <div className="h-4/5 bg-[#cdcdcd]" />
                        </div>
                        <button aria-label="Вниз" className="flex h-3.5 items-center">
                            <svg width="7" height="5" viewBox="0 0 7 5" fill="none"><path d="M.5 1l3 3 3-3" stroke="#444" strokeWidth="1.400" /></svg>
                        </button>
                    </div>
                </div>
                <div className="flex h-[18px] text-[10px]">
                    {TERMINAL_TABS.map((tab, i) => (
                        <button
                            key={tab.title}
                            className={clsx(
                                'flex items-center',
                                i === 0
                                    ? '-mt-px mb-px border border-t-0 border-[#444] bg-white px-2 text-[#222]'
                                    : 'my-[3px] border-r border-[#777] px-[7px] text-[#8a8a8a]',
                            )}
                        >
                            {tab.title}
                            {tab.count && <span className="ml-0.5 mt-1 text-[9px] font-bold leading-none text-[#f02c3c]">{tab.count}</span>}
                        </button>
                    ))}
                </div>
            </div>
        </section>
    );
}

function StatusBar() {
    return (
        <footer className="mt-0.5 flex h-[21px] shrink-0 items-end border-t-2 border-[#d4d4d4] text-[10px] text-[#222]">
            <p className="flex h-4 flex-1 items-center pl-px">Для вызова справки нажмите F1</p>
            <p className="flex h-[17px] w-[101px] items-center overflow-hidden whitespace-nowrap border-l border-r border-[#b0b0b0] pl-[3px]">EURUSD+GBPUSD-20</p>
            <span className="h-[17px] w-[88px] border-r border-[#b8b8b8]" />
            <span className="h-[17px] w-[60px] border-r border-[#b8b8b8]" />
            <span className="h-[17px] w-[60px] border-r border-[#b8b8b8]" />
            <span className="h-[17px] w-[57px] border-r border-[#b8b8b8]" />
            <span className="h-[17px] w-[59px] border-r border-[#b8b8b8]" />
            <span className="h-[17px] w-[56px] border-r border-[#b8b8b8]" />
            <p className="flex h-[17px] w-[106px] items-center gap-1 pl-[3px]">
                <svg width="21" height="11" viewBox="0 0 21 11" aria-hidden="true">
                    {[0, 1, 2, 3, 4, 5, 6, 7].map((i) => (
                        <g key={i}>
                            <rect x={i * 2.7} y="0" width="2" height={8 - i * 0.9} fill="#7d941b" />
                            <rect x={i * 2.7} y={9 - i * 0.9} width="2" height={2 + i * 0.9} fill="#1d4a6e" />
                        </g>
                    ))}
                </svg>
                1476/3 kb
            </p>
        </footer>
    );
}

function ActivationNotice() {
    return (
        <div className="pointer-events-none absolute bottom-8 right-10 w-[296px] text-[#8c8c8c]/60">
            <p className="text-[16px] leading-5">Активация Windows</p>
            <p className="text-[11px] leading-[17px]">Чтобы активировать Windows, перейдите в раздел "Параметры".</p>
        </div>
    );
}

export default function App() {
    return (
        <div className="relative flex h-screen flex-col overflow-hidden bg-[#f0f0f0] font-['Open_Sans','Noto_Sans',sans-serif]">
            <TitleBar />
            <nav className="flex h-[18px] items-center gap-[13px] bg-[#f0f0f0] pl-[5px] text-[10px] text-[#222]">
                {MENU.map((item) => (
                    <button key={item}>{item}</button>
                ))}
            </nav>
            <Toolbar />
            <main className="flex">
                <MarketWatch />
                <ChartArea />
            </main>
            <Terminal />
            <StatusBar />
            <ActivationNotice />
        </div>
    );
}
